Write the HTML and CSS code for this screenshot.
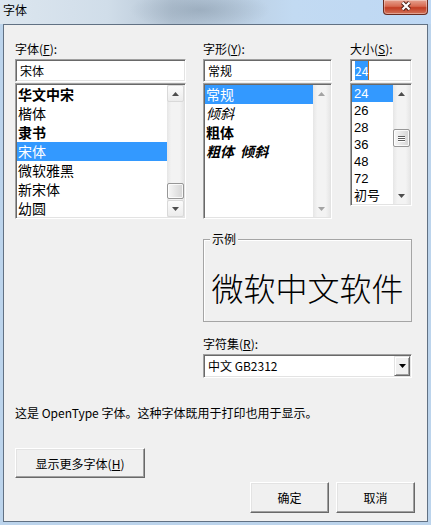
FILE: index.html
```html
<!DOCTYPE html>
<html lang="zh-CN">
<head>
    <meta charset="UTF-8">
    <meta name="viewport" content="width=device-width, initial-scale=1.0">
    <title>字体</title>
    <link rel="stylesheet" href="styles.css">
</head>
<body>
    <div class="window">
        <div class="titlebar">
            <span class="title">字体</span>
            <button class="close-btn" aria-label="关闭">
                <svg width="14" height="10" viewBox="0 0 14 10">
                    <path d="M3.5 1.5 L10.5 8.5 M10.5 1.5 L3.5 8.5" stroke="#4b2219" stroke-width="4.2" fill="none"/>
                    <path d="M3.5 1.5 L10.5 8.5 M10.5 1.5 L3.5 8.5" stroke="#fff" stroke-width="2.2" fill="none"/>
                </svg>
            </button>
        </div>

        <div class="dialog">
            <div class="top">
                <!-- font family -->
                <div class="col col-font">
                    <label class="label">字体(<u>F</u>):</label>
                    <div class="field">宋体</div>
                    <div class="list list-font">
                        <ul class="items">
                            <li class="bold">华文中宋</li>
                            <li>楷体</li>
                            <li class="bold">隶书</li>
                            <li class="selected">宋体</li>
                            <li>微软雅黑</li>
                            <li>新宋体</li>
                            <li>幼圆</li>
                        </ul>
                        <div class="scrollbar">
                            <div class="sb-btn">
                                <svg width="7" height="4" viewBox="0 0 7 4"><path d="M0 4 L3.5 0 L7 4 Z" fill="#4d4d4d"/></svg>
                            </div>
                            <div class="sb-track track-end">
                                <div class="sb-thumb"></div>
                            </div>
                            <div class="sb-btn">
                                <svg width="7" height="4" viewBox="0 0 7 4"><path d="M0 0 L7 0 L3.5 4 Z" fill="#4d4d4d"/></svg>
                            </div>
                        </div>
                    </div>
                </div>

                <div class="col-right">
                    <div class="pair">
                        <!-- style -->
                        <div class="col col-style">
                            <label class="label">字形(<u>Y</u>):</label>
                            <div class="field">常规</div>
                            <div class="list list-style">
                                <ul class="items">
                                    <li class="selected">常规</li>
                                    <li class="italic">倾斜</li>
                                    <li class="bold">粗体</li>
                                    <li class="bold italic">粗体&nbsp;&nbsp;倾斜</li>
                                </ul>
                                <div class="scrollbar">
                                    <div class="sb-btn off">
                                        <svg width="7" height="4" viewBox="0 0 7 4"><path d="M0 4 L3.5 0 L7 4 Z" fill="#a3a3a3"/></svg>
                                    </div>
                                    <div class="sb-track"></div>
                                    <div class="sb-btn off">
                                        <svg width="7" height="4" viewBox="0 0 7 4"><path d="M0 0 L7 0 L3.5 4 Z" fill="#a3a3a3"/></svg>
                                    </div>
                                </div>
                            </div>
                        </div>

                        <!-- size -->
                        <div class="col col-size">
                            <label class="label">大小(<u>S</u>):</label>
                            <div class="field"><span class="sel-text">24</span></div>
                            <div class="list list-size">
                                <ul class="items">
                                    <li class="selected">24</li>
                                    <li>26</li>
                                    <li>28</li>
                                    <li>36</li>
                                    <li>48</li>
                                    <li>72</li>
                                    <li>初号</li>
                                </ul>
                                <div class="scrollbar">
                                    <div class="sb-btn off">
                                        <svg width="7" height="4" viewBox="0 0 7 4"><path d="M0 4 L3.5 0 L7 4 Z" fill="#4d4d4d"/></svg>
                                    </div>
                                    <div class="sb-track">
                                        <div class="sb-thumb grip">
                                            <span></span><span></span><span></span>
                                        </div>
                                    </div>
                                    <div class="sb-btn off">
                                        <svg width="7" height="4" viewBox="0 0 7 4"><path d="M0 0 L7 0 L3.5 4 Z" fill="#4d4d4d"/></svg>
                                    </div>
                                </div>
                            </div>
                        </div>
                    </div>

                    <div class="sample">
                        <span class="sample-title">示例</span>
                        <span class="sample-text">微软中文软件</span>
                    </div>

                    <label class="label charset-label">字符集(<u>R</u>):</label>
                    <div class="select">
                        <span class="select-text">中文 GB2312</span>
                        <span class="drop-btn">
                            <svg width="7" height="4" viewBox="0 0 7 4"><path d="M0 0 L7 0 L3.5 4 Z" fill="#000"/></svg>
                        </span>
                    </div>
                </div>
            </div>

            <p class="info">这是 OpenType 字体。这种字体既用于打印也用于显示。</p>

            <button class="btn btn-more">显示更多字体(<u>H</u>)</button>

            <div class="actions">
                <button class="btn btn-action">确定</button>
                <button class="btn btn-action">取消</button>
            </div>
        </div>
    </div>
</body>
</html>
```

FILE: styles.css
```css
* {
    box-sizing: border-box;
}
body {
    margin: 0;
    width: 431px;
    height: 525px;
    overflow: hidden;
    font-family: "Noto Sans CJK SC", sans-serif;
    font-size: 12px;
    color: #000;
    background: #bcd4ec;
}
.window {
    height: 525px;
    display: flex;
    flex-direction: column;
}

/* glass title bar */
.titlebar {
    height: 24px;
    flex-shrink: 0;
    display: flex;
    justify-content: space-between;
    align-items: flex-start;
    padding: 0 3px;
    background:
        radial-gradient(ellipse 70px 20px at 200px 10px, rgba(130, 148, 165, 0.5), transparent),
        linear-gradient(to right, #dce6ef 0, #d0dde9 25%, #b6c6d6 40%, #bccfe2 55%, #c2daf2 68%, #bed8f4 100%);
}
.title {
    margin-top: 3px;
    line-height: 14px;
}
.close-btn {
    width: 45px;
    height: 15px;
    padding: 0 0 3px;
    border: 1px solid #6a2c20;
    border-top: none;
    border-radius: 0 0 4px 4px;
    background: linear-gradient(#e6a290, #d76a51 45%, #c23c22 55%, #d2745b);
    box-shadow: inset 0 0 0 1px rgba(255, 255, 255, 0.35);
    display: flex;
    align-items: center;
    justify-content: center;
}

/* dialog body */
.dialog {
    flex: 1;
    margin: 0 3px 3px;
    border: 1px solid #617183;
    background: #f0f0f0;
    padding: 17px 12px 0 11px;
}
.top {
    display: flex;
    gap: 17px;
    align-items: flex-start;
}
.col-font {
    width: 171px;
}
.col-right {
    width: 209px;
}
.pair {
    display: flex;
    gap: 18px;
    align-items: flex-start;
}
.col-style {
    width: 129px;
}
.col-size {
    width: 62px;
}
.label {
    display: block;
    line-height: 14px;
    margin-bottom: 3px;
}

/* sunken edit box */
.field {
    height: 23px;
    background: #fff;
    border: 1px solid;
    border-color: #a0a0a0 #fff #fff #a0a0a0;
    box-shadow: inset 1px 1px 0 #696969, inset -1px -1px 0 #e3e3e3;
    padding-left: 4px;
    line-height: 21px;
}
.sel-text {
    background: #3399ff;
    color: #fff;
    padding: 1px 0;
    border-right: 1px solid #c26a1a;
}

/* list boxes */
.list {
    display: flex;
    margin-top: 1px;
    padding: 1px;
    background: #fff;
    border: 1px solid;
    border-color: #a0a0a0 #fff #fff #a0a0a0;
    box-shadow: inset 1px 1px 0 #696969, inset -1px -1px 0 #e3e3e3;
}
.list-font,
.list-style {
    height: 136px;
}
.list-size {
    height: 123px;
}
.items {
    flex: 1;
    list-style: none;
    margin: 0;
    padding: 0;
    overflow: hidden;
}
.items li {
    height: 19px;
    line-height: 19px;
    padding-left: 1px;
    font-size: 14px;
    white-space: nowrap;
}
.list-size .items li {
    height: 17px;
    line-height: 17px;
    padding-left: 2px;
    font-family: "Liberation Sans", "Noto Sans CJK SC", sans-serif;
    font-size: 13px;
}
.items li.selected {
    background: #3399ff;
    color: #fff;
}
.bold {
    font-weight: bold;
}
.italic {
    font-style: italic;
}

/* scroll bars */
.scrollbar {
    width: 17px;
    display: flex;
    flex-direction: column;
    background: linear-gradient(to right, #e6e6e6, #f3f3f3 25%, #f3f3f3 75%, #e6e6e6);
}
.sb-btn {
    height: 17px;
    flex-shrink: 0;
    display: flex;
    align-items: center;
    justify-content: center;
    border: 1px solid #d9d9d9;
    border-radius: 2px;
    background: linear-gradient(#fbfbfb, #ececec);
}
.sb-btn.off {
    border-color: transparent;
    background: none;
}
.sb-track {
    flex: 1;
    display: flex;
    flex-direction: column;
}
.track-end {
    justify-content: flex-end;
    padding-bottom: 1px;
}
.sb-thumb {
    height: 16px;
    border: 1px solid #979797;
    border-radius: 2px;
    background: linear-gradient(to right, #f7f7f7, #e2e2e2 60%, #d4d4d4);
    box-shadow: inset 0 0 0 1px rgba(255, 255, 255, 0.8);
}
.list-size .sb-thumb {
    height: 18px;
    margin-top: 27px;
}
.grip {
    display: flex;
    flex-direction: column;
    align-items: center;
    justify-content: center;
    gap: 1px;
}
.grip span {
    width: 7px;
    height: 1px;
    background: #5d5d5d;
    box-shadow: 0 1px 0 #fff;
}

/* sample group */
.sample {
    position: relative;
    margin-top: 20px;
    height: 83px;
    border: 1px solid #a5a5a5;
    box-shadow: inset 1px 1px 0 #fff;
    display: flex;
    align-items: center;
    justify-content: center;
    padding-top: 13px;
}
.sample-title {
    position: absolute;
    top: -8px;
    left: 6px;
    padding: 0 2px;
    line-height: 14px;
    background: #f0f0f0;
}
.sample-text {
    font-size: 32px;
    line-height: 1;
    font-weight: 300;
}
.charset-label {
    margin-top: 15px;
}

/* combo box */
.select {
    height: 24px;
    display: flex;
    align-items: stretch;
    background: #fff;
    border: 1px solid;
    border-color: #a0a0a0 #fff #fff #a0a0a0;
    box-shadow: inset 1px 1px 0 #696969, inset -1px -1px 0 #e3e3e3;
    padding: 1px;
}
.select-text {
    flex: 1;
    padding-left: 3px;
    line-height: 20px;
}
.drop-btn {
    width: 16px;
    display: flex;
    align-items: center;
    justify-content: center;
    background: #f0f0f0;
    border: 1px solid;
    border-color: #e3e3e3 #696969 #696969 #e3e3e3;
    box-shadow: inset 1px 1px 0 #fff, inset -1px -1px 0 #a0a0a0;
}

.info {
    margin: 28px 0 0;
    line-height: 14px;
}

/* push buttons */
.btn {
    font-family: inherit;
    font-size: 12px;
    color: #000;
    background: #f0f0f0;
    border: 1px solid;
    border-color: #fff #696969 #696969 #fff;
    box-shadow: inset -1px -1px 0 #a0a0a0, inset 1px 1px 0 #e3e3e3;
    padding: 0;
}
.btn-more {
    display: block;
    margin-top: 28px;
    width: 130px;
    height: 30px;
}
.actions {
    display: flex;
    justify-content: flex-end;
    gap: 7px;
    margin-top: 4px;
}
.btn-action {
    width: 79px;
    height: 31px;
}
```
